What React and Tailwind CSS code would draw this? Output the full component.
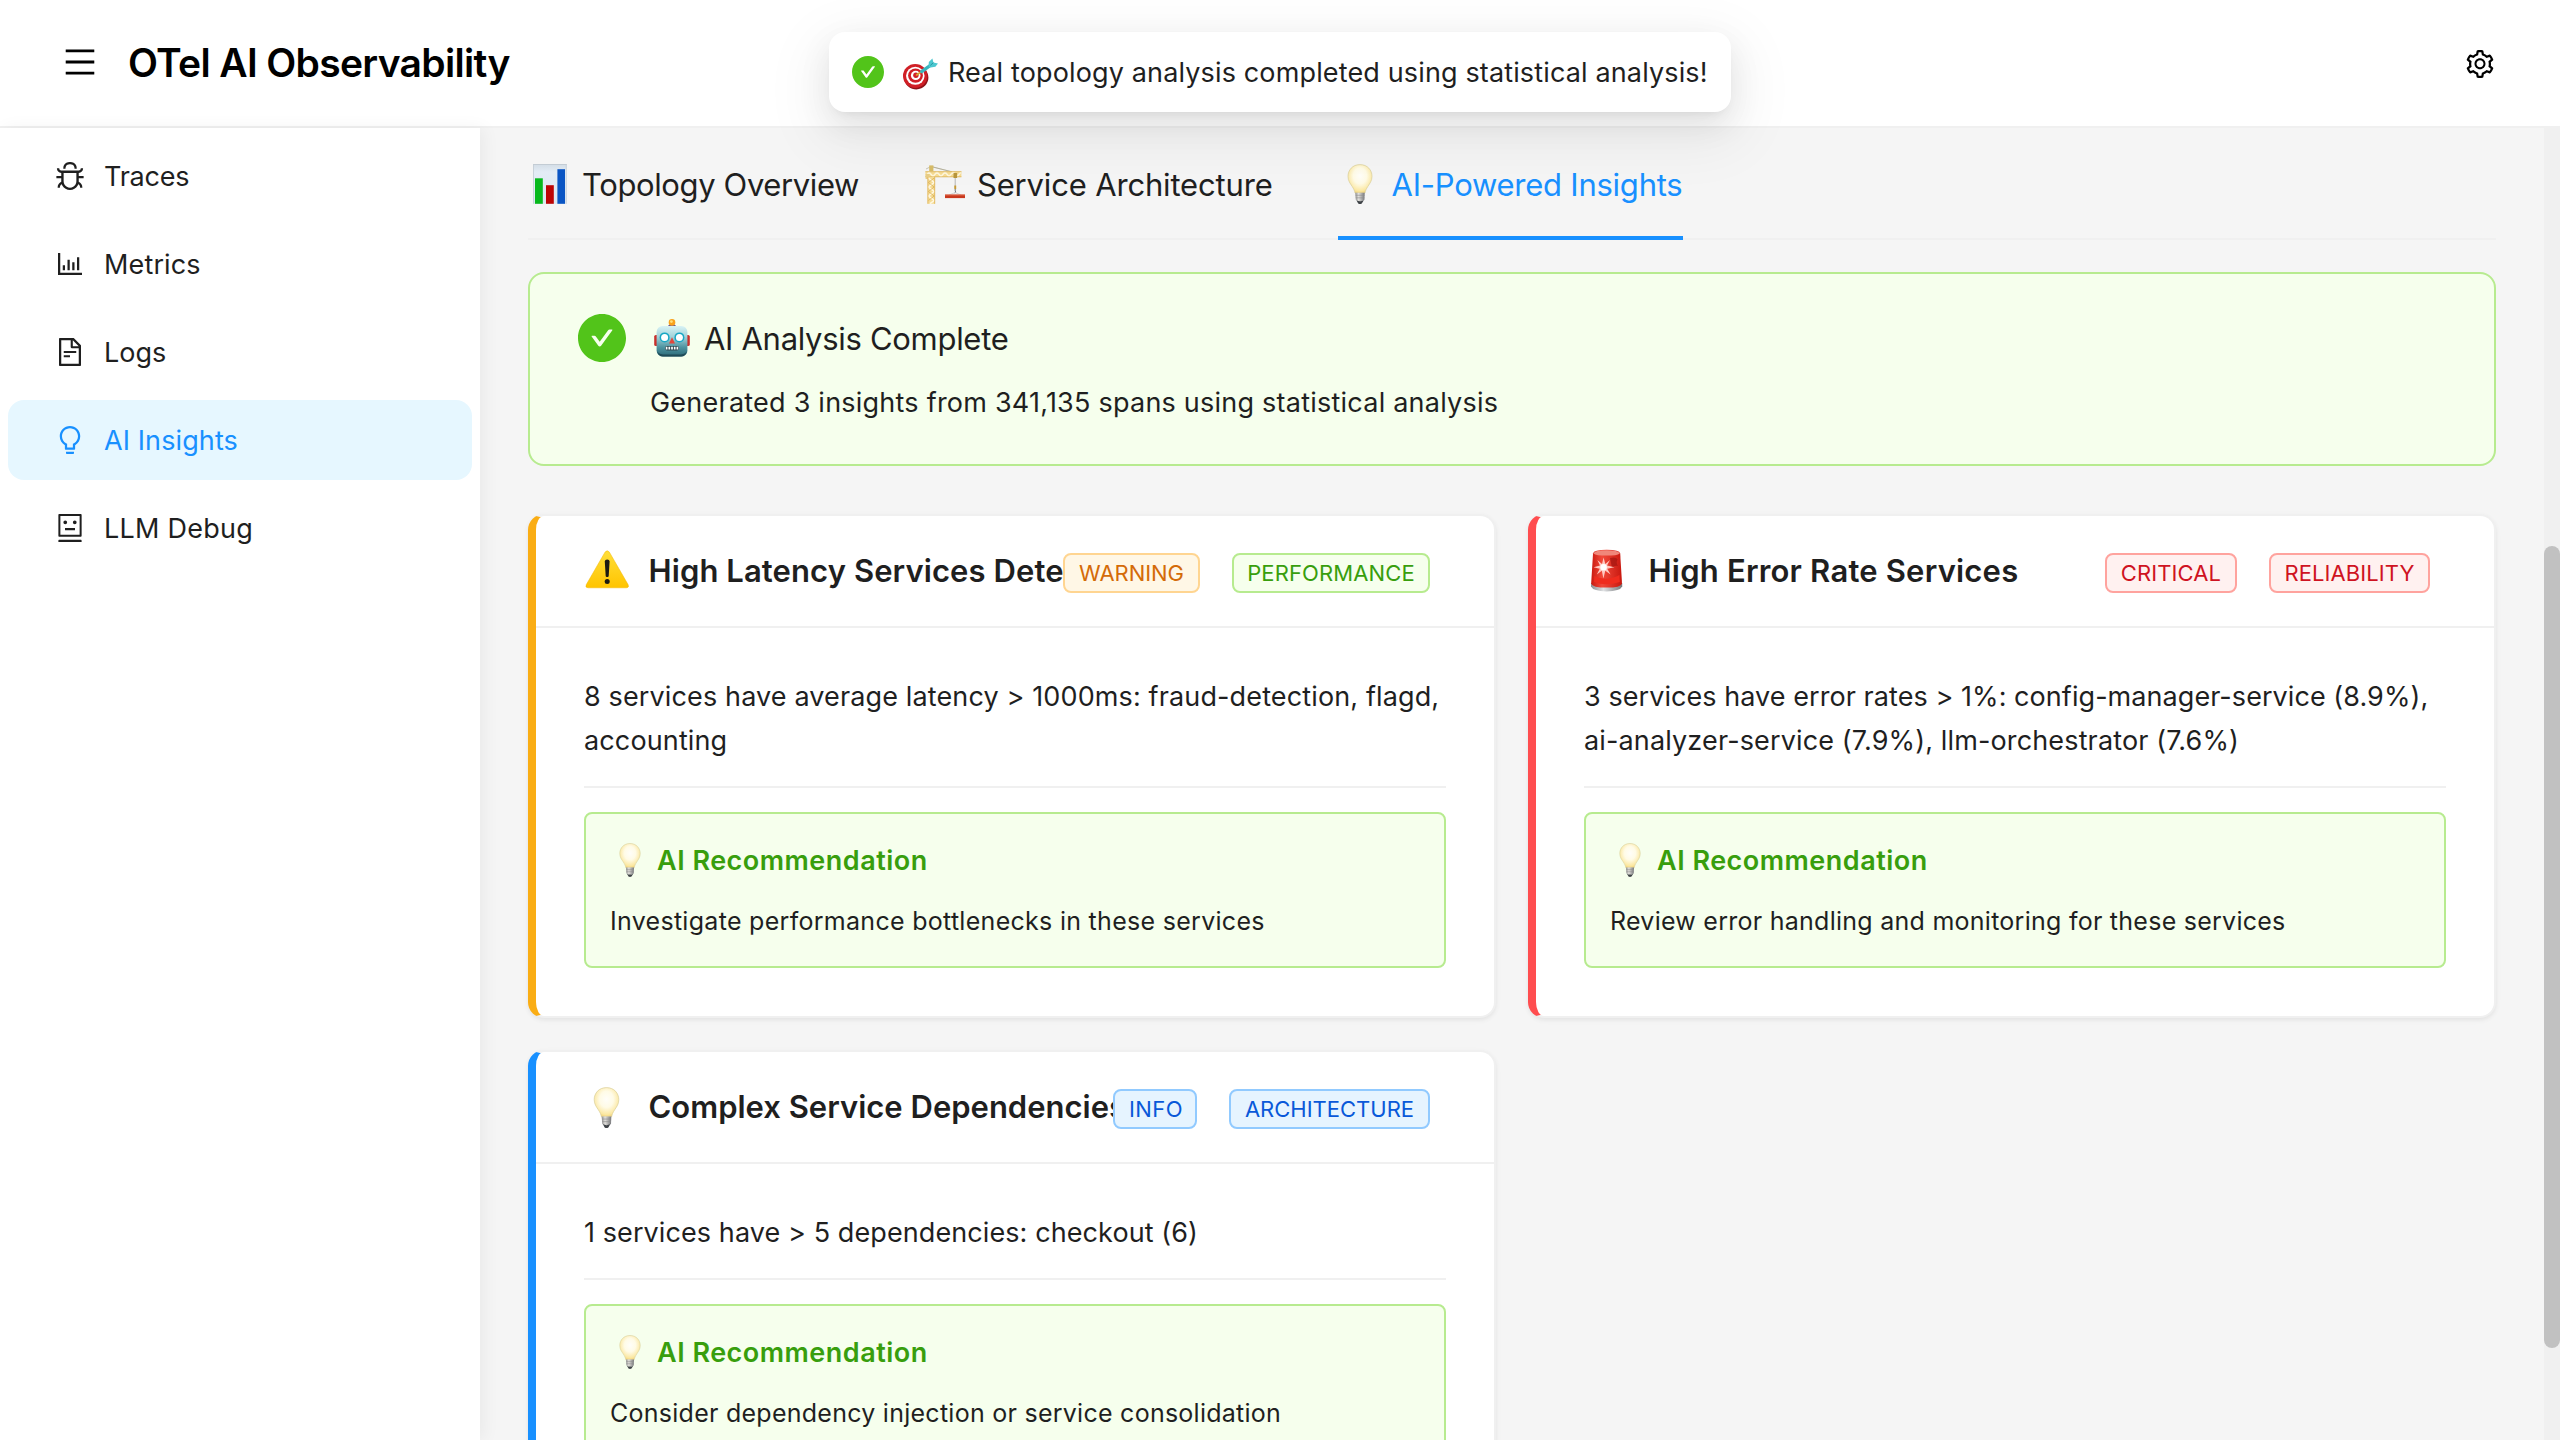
import React from "react";
import {
  AiOutlineMenu,
  AiOutlineBug,
  AiOutlineBarChart,
  AiOutlineFileText,
  AiOutlineBulb,
  AiOutlineRobot,
  AiOutlineSetting,
  AiFillCheckCircle,
} from "react-icons/ai";

const ICON_BOX = "64 64 896 896";

function ChartEmoji({ className }) {
  return (
    <svg viewBox="0 0 40 40" className={className} role="img" aria-label="📊">
      <defs>
        <linearGradient id="chartBg" x1="0" y1="0" x2="0" y2="1">
          <stop offset="0" stopColor="#d3dde6" />
          <stop offset="0.2" stopColor="#e3ecf5" />
          <stop offset="1" stopColor="#dce7f2" />
        </linearGradient>
      </defs>
      <rect x="3" y="0" width="33.6" height="39.8" fill="url(#chartBg)" />
      <rect x="3" y="0" width="33.6" height="1" fill="#c3ccd4" />
      <rect x="3" y="0" width="0.8" height="39.8" fill="#c3ccd4" />
      <rect x="35.8" y="0" width="0.8" height="39.8" fill="#c3ccd4" />
      <rect x="5" y="14.3" width="7.8" height="25.5" fill="#07b81c" />
      <rect x="16" y="21.2" width="7.8" height="18.6" fill="#bd0404" />
      <rect x="27.4" y="5.2" width="7.6" height="34.6" fill="#0a55c4" />
    </svg>
  );
}

function CraneEmoji({ className }) {
  return (
    <svg viewBox="0 0 40 40" className={className} role="img" aria-label="🏗️">
      <path d="M1 5 L6 2.5 L31 9 M6 2.5 L30 8.5" stroke="#a9a48c" strokeWidth="0.6" fill="none" />
      <rect x="4.2" y="1.4" width="4.2" height="6" fill="#d8bd68" />
      <rect x="0.4" y="7.4" width="36" height="5.6" fill="#f6dc94" />
      <path d="M1 12.5 L4 8 L8 12.5 L12 8 L16 12.5 L20 8 L24 12.5 L28 8 L32 12.5 L36 8" stroke="#fff6d9" strokeWidth="1.5" fill="none" />
      <path d="M0.4 7.7 H36.4 M0.4 12.8 H36.4" stroke="#dcb45a" strokeWidth="0.8" />
      <rect x="0.6" y="10" width="4" height="5" fill="#e8cd86" />
      <rect x="28.5" y="9" width="3.6" height="5" fill="#b8963c" />
      <rect x="2.6" y="13" width="7.4" height="26.8" fill="#f5dc96" />
      <path d="M3.4 14 L9.2 18.5 L3.4 23 L9.2 27.5 L3.4 32 L9.2 36.5 L5 39.6" stroke="#fff8e2" strokeWidth="1.5" fill="none" />
      <path d="M9.2 14 L3.4 18.5 L9.2 23 L3.4 27.5 L9.2 32 L3.4 36.5" stroke="#d9ab4d" strokeWidth="0.7" fill="none" />
      <path d="M2.9 13 V39.8 M9.7 13 V39.8" stroke="#e2b75e" strokeWidth="0.9" />
      <path d="M30.2 14 V24" stroke="#b5b5b5" strokeWidth="1" />
      <rect x="29.3" y="21.5" width="1.9" height="3.6" fill="#c59a35" />
      <path d="M30.2 25 V27 Q31.8 28.4 29.6 28.8" stroke="#70777f" strokeWidth="1" fill="none" />
      <path d="M30.2 28.5 L24 31 M30.2 28.5 L36 31" stroke="#c9c9c9" strokeWidth="0.7" />
      <rect x="20" y="30.6" width="20" height="3.5" fill="#c9381e" />
      <rect x="20" y="30.6" width="20" height="0.9" fill="#e0694a" />
    </svg>
  );
}

function BulbEmoji({ className }) {
  return (
    <svg viewBox="0 0 40 40" className={className} role="img" aria-label="💡">
      <defs>
        <radialGradient id="bulbGlass" cx="0.5" cy="0.4" r="0.62">
          <stop offset="0" stopColor="#fffef9" />
          <stop offset="0.45" stopColor="#fffbe6" />
          <stop offset="0.85" stopColor="#fbe7a0" />
          <stop offset="1" stopColor="#efcf74" />
        </radialGradient>
        <linearGradient id="bulbBase" x1="0" y1="0" x2="1" y2="0">
          <stop offset="0" stopColor="#8f8f8f" />
          <stop offset="0.35" stopColor="#e2e0dc" />
          <stop offset="1" stopColor="#77787b" />
        </linearGradient>
      </defs>
      <path
        d="M20 0.6 C12.6 0.6 8 6 8 12.4 C8 16.8 10.2 19.4 12 22.2 C13.8 25 14.6 26.6 15 29 H25 C25.4 26.6 26.2 25 28 22.2 C29.8 19.4 32 16.8 32 12.4 C32 6 27.4 0.6 20 0.6 Z"
        fill="url(#bulbGlass)"
        stroke="#d9cf9c"
        strokeWidth="0.7"
      />
      <path d="M15.3 28.8 H24.7 L24.4 36 Q20 38.6 15.8 36 Z" fill="url(#bulbBase)" />
      <path d="M15.6 31.3 H24.5 M15.7 33.8 H24.4" stroke="#8b8b8b" strokeWidth="0.6" />
      <path d="M16.4 36.2 Q20 38.2 23.8 36.2 L21.8 39.4 Q20 40.4 18.2 39.4 Z" fill="#3f4347" />
    </svg>
  );
}

function RobotEmoji({ className }) {
  return (
    <svg viewBox="0 0 38 38" className={className} role="img" aria-label="🤖">
      <defs>
        <linearGradient id="robotFace" x1="0" y1="0" x2="0" y2="1">
          <stop offset="0" stopColor="#d8f3f5" />
          <stop offset="0.35" stopColor="#a3d3da" />
          <stop offset="0.7" stopColor="#4d93a0" />
          <stop offset="1" stopColor="#2a6876" />
        </linearGradient>
      </defs>
      <rect x="1.2" y="16" width="5" height="11" rx="1.6" fill="#c9302c" />
      <rect x="31.8" y="16" width="5" height="11" rx="1.6" fill="#c9302c" />
      <path d="M14.5 8.5 Q15 5 19 5 Q23 5 23.5 8.5 Z" fill="#6e5590" />
      <circle cx="19" cy="3.4" r="3.3" fill="#f9a21c" />
      <circle cx="18.4" cy="2.6" r="1.4" fill="#ffdf7a" />
      <rect x="3.6" y="7" width="30.8" height="30.6" rx="6" fill="url(#robotFace)" />
      <path d="M4 31 Q5 37.6 10 37.6 H28 Q33 37.6 34 31 Q33 35.4 28 35.4 H10 Q5 35.4 4 31 Z" fill="#1f4b57" />
      <circle cx="11.6" cy="18.4" r="5" fill="#19a7c4" />
      <circle cx="26.4" cy="18.4" r="5" fill="#19a7c4" />
      <circle cx="11.6" cy="18.4" r="3.5" fill="#ffffff" />
      <circle cx="26.4" cy="18.4" r="3.5" fill="#ffffff" />
      <path d="M19 18.2 L22 24.6 H16 Z" fill="#e2473c" />
      <rect x="12" y="27" width="14" height="4.4" rx="1.8" fill="#2b4750" />
      <path d="M13.6 27.8 V30.6 M16.3 27.8 V30.6 M19 27.8 V30.6 M21.7 27.8 V30.6 M24.4 27.8 V30.6" stroke="#ffffff" strokeWidth="1.7" />
    </svg>
  );
}

function TargetEmoji({ className }) {
  return (
    <svg viewBox="0 0 36 36" className={className} role="img" aria-label="🎯">
      <ellipse cx="14.2" cy="21.4" rx="12.2" ry="12" fill="#8e1218" transform="rotate(20 14.2 21.4)" />
      <ellipse cx="13.2" cy="20" rx="12.2" ry="11.9" fill="#d01f26" />
      <ellipse cx="13.3" cy="19.8" rx="9.3" ry="9" fill="#ffffff" />
      <ellipse cx="13.5" cy="19.6" rx="7.4" ry="7.2" fill="#d01f26" />
      <ellipse cx="13.7" cy="19.4" rx="4.8" ry="4.6" fill="#ffffff" />
      <circle cx="13.9" cy="19.2" r="2.7" fill="#d01f26" />
      <path d="M14.6 18.9 L21 14.6" stroke="#d7a52a" strokeWidth="1.8" strokeLinecap="round" />
      <path d="M19.6 15.6 L29.4 8.6" stroke="#3ab5be" strokeWidth="3.2" strokeLinecap="round" />
      <path d="M26.6 10.4 L26.8 6 L30.4 2.6 L31.4 6.6 L36 7.4 L33.4 10.8 L28.6 11.6 Z" fill="#4cc7cf" />
      <path d="M28.4 9.4 L31.4 6.6" stroke="#24909b" strokeWidth="0.9" />
    </svg>
  );
}

function WarningEmoji({ className }) {
  return (
    <svg viewBox="0 0 44 44" className={className} role="img" aria-label="⚠️">
      <defs>
        <linearGradient id="warnFill" x1="0" y1="0" x2="0" y2="1">
          <stop offset="0" stopColor="#ffdf3a" />
          <stop offset="1" stopColor="#ffc400" />
        </linearGradient>
      </defs>
      <path
        d="M20 3.2 Q22.2 0.4 24.4 3.2 L43.2 35.8 Q44.2 38.7 41.4 38.8 H3 Q0.2 38.7 1.2 35.8 Z"
        fill="url(#warnFill)"
        stroke="#f2b600"
        strokeWidth="0.5"
      />
      <path d="M19.8 12.4 Q19.8 10.4 22.2 10.4 Q24.6 10.4 24.6 12.4 L23.7 27.2 Q22.2 29 20.7 27.2 Z" fill="#1c1a12" />
      <circle cx="22.2" cy="32.4" r="2.5" fill="#1c1a12" />
    </svg>
  );
}

function SirenEmoji({ className }) {
  return (
    <svg viewBox="0 0 44 44" className={className} role="img" aria-label="🚨">
      <defs>
        <linearGradient id="sirenGlass" x1="0" y1="0" x2="1" y2="0">
          <stop offset="0" stopColor="#c9190f" />
          <stop offset="0.35" stopColor="#f2493a" />
          <stop offset="1" stopColor="#c8180f" />
        </linearGradient>
        <linearGradient id="sirenBase" x1="0" y1="0" x2="1" y2="0">
          <stop offset="0" stopColor="#8c8f92" />
          <stop offset="0.4" stopColor="#dfe1e3" />
          <stop offset="1" stopColor="#76797c" />
        </linearGradient>
      </defs>
      <path d="M6 34 H37.2 V37.6 Q35 42.4 21.6 42.4 Q8.2 42.4 6 37.6 Z" fill="url(#sirenBase)" />
      <path d="M8 4.4 Q8.6 0.8 21.6 0.8 Q34.6 0.8 35.2 4.4 L37 34.4 Q36 38.6 21.6 38.6 Q7.2 38.6 6.2 34.4 Z" fill="url(#sirenGlass)" />
      <path d="M8.4 4.4 Q10 1.2 21.6 1.2 Q33.2 1.2 34.8 4.4 Q32 6.6 21.6 6.6 Q11.2 6.6 8.4 4.4 Z" fill="#f0877a" />
      <path d="M25 9 Q31 7.4 32.6 10.4 Q30.6 13.4 33 17 Q29 16 27 19 Z" fill="#a51712" opacity="0.75" />
      <path d="M9.4 27 Q21 33 34.4 26 L34.8 33 Q21 37.6 9 33 Z" fill="#ef2c1e" />
      <path
        d="M18.6 8.6 L20.3 15 L25 11 L22 16.6 L29.4 18.2 L22.2 19.8 L25.6 25.6 L20.3 21.8 L18.4 29.4 L16.8 21.8 L11.8 25.6 L14.8 19.8 L8.6 18.2 L15 16.6 L12.4 11 L17 15 Z"
        fill="#ffc9c1"
      />
      <circle cx="18.6" cy="18.2" r="3.2" fill="#ffffff" />
    </svg>
  );
}

const NAV = [
  { label: "Traces", Icon: AiOutlineBug, track: "tracking-[-0.25px]" },
  { label: "Metrics", Icon: AiOutlineBarChart, track: "tracking-[0.14px]" },
  { label: "Logs", Icon: AiOutlineFileText, track: "tracking-[0px]" },
  { label: "AI Insights", Icon: AiOutlineBulb, track: "tracking-[0.1px]", active: true },
  { label: "LLM Debug", Icon: AiOutlineRobot, track: "tracking-[0.25px]" },
];

const TABS = [
  { label: "Topology Overview", Emoji: ChartEmoji, box: "w-[331px] tracking-[-0.38px]" },
  { label: "Service Architecture", Emoji: CraneEmoji, box: "w-[350.5px] tracking-[-0.17px]" },
  { label: "AI-Powered Insights", Emoji: BulbEmoji, box: "w-[345px] tracking-[-0.24px]", active: true },
];

const TONE = {
  orange: "border-[#ffd591] bg-[#fff7e6] text-[#d46b08]",
  green: "border-[#b7eb8f] bg-[#f6ffed] text-[#389e0d]",
  red: "border-[#ffa39e] bg-[#fff1f0] text-[#cf1322]",
  blue: "border-[#91caff] bg-[#e6f4ff] text-[#0958d9]",
};

const INSIGHTS = [
  {
    title: "High Latency Services Detected",
    titleTrack: "tracking-[0.09px]",
    Emoji: WarningEmoji,
    edge: "border-l-[#faad14]",
    tags: [
      { text: "WARNING", tone: "orange", box: "w-[137px] tracking-[-0.05px]" },
      { text: "PERFORMANCE", tone: "green", box: "w-[198px] tracking-[0.12px]" },
    ],
    lines: [
      { text: "8 services have average latency > 1000ms: fraud-detection, flagd,", track: "tracking-[0.13px]" },
      { text: "accounting", track: "tracking-[0.13px]" },
    ],
    recommendation: "Investigate performance bottlenecks in these services",
    recTrack: "tracking-[0.29px]",
  },
  {
    title: "High Error Rate Services",
    titleTrack: "tracking-[0.2px]",
    Emoji: SirenEmoji,
    edge: "border-l-[#ff4d4f]",
    tags: [
      { text: "CRITICAL", tone: "red", box: "w-[132px] tracking-[0.1px]" },
      { text: "RELIABILITY", tone: "red", box: "w-[161px] tracking-[0.1px]" },
    ],
    lines: [
      { text: "3 services have error rates > 1%: config-manager-service (8.9%),", track: "tracking-[0.06px]" },
      { text: "ai-analyzer-service (7.9%), llm-orchestrator (7.6%)", track: "tracking-[0.14px]" },
    ],
    recommendation: "Review error handling and monitoring for these services",
    recTrack: "tracking-[0.26px]",
  },
  {
    title: "Complex Service Dependencies",
    titleTrack: "tracking-[0px]",
    Emoji: BulbEmoji,
    bulb: true,
    edge: "border-l-[#1890ff]",
    tags: [
      { text: "INFO", tone: "blue", box: "w-[84px] tracking-[0.4px] pl-0.5" },
      { text: "ARCHITECTURE", tone: "blue", box: "w-[201px] tracking-[0px]" },
    ],
    lines: [{ text: "1 services have > 5 dependencies: checkout (6)", track: "tracking-[0.09px]" }],
    recommendation: "Consider dependency injection or service consolidation",
    recTrack: "tracking-[0.26px]",
  },
];

function InsightCard({ item }) {
  const { Emoji } = item;
  return (
    <article
      className={`flex flex-col rounded-[16px] border-2 border-l-8 border-[#f0f0f0] bg-white shadow-[0_2px_4px_rgba(0,0,0,0.06),0_2px_12px_-2px_rgba(0,0,0,0.03)] ${item.edge}`}
    >
      <header className="flex h-28 shrink-0 items-center border-b-2 border-[#f0f0f0] pl-[49px] pr-[64px]">
        <div className="flex min-w-0 flex-1 items-center overflow-hidden">
          {item.bulb ? (
            <Emoji className="ml-px mr-0.5 h-[41px] w-[41px] shrink-0" />
          ) : (
            <Emoji className="h-11 w-11 shrink-0" />
          )}
          <h3 className={`ml-[19.5px] whitespace-nowrap text-[31px] font-semibold leading-[50px] ${item.titleTrack}`}>
            {item.title}
          </h3>
        </div>
        <div className="mt-1 flex shrink-0 gap-8">
          {item.tags.map((tag) => (
            <span
              key={tag.text}
              className={`flex h-10 items-center justify-center rounded-lg border-2 text-[22px] leading-9 ${TONE[tag.tone]} ${tag.box}`}
            >
              {tag.text}
            </span>
          ))}
        </div>
      </header>
      <div className="px-12 pb-12 pt-[47px]">
        <p className="text-[27px] leading-[44px]">
          {item.lines.map(({ text, track }) => (
            <span key={text} className={`block whitespace-nowrap ${track}`}>
              {text}
            </span>
          ))}
        </p>
        <hr className="mb-6 mt-[23px] border-t-2 border-[#f0f0f0]" />
        <section className="rounded-lg border-2 border-[#b7eb8f] bg-[#f6ffed] p-6">
          <div className="flex h-11 items-center pl-[3px]">
            <BulbEmoji className="h-[34px] w-[34px]" />
            <h4 className="ml-[10px] pt-0.5 text-[27px] font-semibold leading-[44px] tracking-[0.49px] text-[#389e0d]">
              AI Recommendation
            </h4>
          </div>
          <p className={`mt-[18px] text-[25px] leading-[42px] ${item.recTrack}`}>{item.recommendation}</p>
        </section>
      </div>
    </article>
  );
}

export default function App() {
  return (
    <div className="relative flex h-[1440px] w-[2560px] flex-col overflow-hidden bg-[#f5f5f5] font-['Inter',sans-serif] text-[#1f1f1f]">
      <header className="flex h-32 shrink-0 items-center border-b-2 border-[#f0f0f0] bg-white pl-16 pr-[64px] text-black">
        <AiOutlineMenu viewBox={ICON_BOX} className="mb-0.5 h-8 w-8" />
        <h1 className="ml-8 flex-1 text-[39px] font-semibold leading-[60px] tracking-[-0.67px]">OTel AI Observability</h1>
        <AiOutlineSetting viewBox={ICON_BOX} className="mr-0.5 mt-0.5 h-7 w-7" />
      </header>

      <div className="flex min-h-0 flex-1">
        <nav className="relative flex w-[480px] shrink-0 flex-col gap-2 bg-white p-2 shadow-[4px_0_16px_rgba(0,21,20,0.05)]">
          {NAV.map(({ label, Icon, track, active }) => (
            <a
              key={label}
              className={`flex h-20 items-center rounded-[16px] pl-12 text-[27px] leading-[44px] ${track} ${
                active ? "bg-[#e6f7ff] text-[#1890ff]" : ""
              }`}
            >
              <Icon viewBox={ICON_BOX} className="h-7 w-7 shrink-0" />
              <span className="ml-5 pt-0.5">{label}</span>
            </a>
          ))}
        </nav>

        <main className="min-w-0 flex-1 overflow-hidden pl-12 pr-12">
          <div className="flex h-28 gap-16 border-b-2 border-[#f0f0f0]">
            {TABS.map(({ label, Emoji, box, active }) => (
              <button
                key={label}
                className={`-mb-0.5 flex shrink-0 items-center border-b-4 pl-0.5 pt-1.5 text-[31px] leading-[50px] ${box} ${
                  active ? "border-[#1890ff] text-[#1890ff]" : "border-transparent"
                }`}
              >
                <Emoji className="mb-0.5 h-10 w-10 shrink-0" />
                <span className="ml-3 whitespace-nowrap">{label}</span>
              </button>
            ))}
          </div>

          <section className="mt-8 flex h-[194px] rounded-[16px] border-2 border-[#b7eb8f] bg-[#f6ffed] pl-12 pt-10">
            <AiFillCheckCircle viewBox={ICON_BOX} className="h-12 w-12 shrink-0 text-[#52c41a]" />
            <div className="ml-6">
              <div className="flex h-12 items-center pl-[3px]">
                <RobotEmoji className="h-[38px] w-[38px]" />
                <h2 className="ml-[13px] pt-0.5 text-[31px] leading-[50px] tracking-[-0.3px]">AI Analysis Complete</h2>
              </div>
              <p className="mt-[19px] text-[27px] leading-[44px] tracking-[0.23px]">
                Generated 3 insights from 341,135 spans using statistical analysis
              </p>
            </div>
          </section>

          <div className="mt-12 grid grid-cols-2 gap-8">
            {INSIGHTS.map((item) => (
              <InsightCard key={item.title} item={item} />
            ))}
          </div>
        </main>

        <div className="w-4 shrink-0 bg-[#f0f0f0] pt-[418px]">
          <div className="h-[802px] rounded-full bg-[#c1c1c1]" />
        </div>
      </div>

      <div className="absolute left-[829px] top-8 flex h-20 w-[902px] items-center rounded-[16px] bg-white pl-[23px] shadow-[0_12px_32px_0_rgba(0,0,0,0.08),0_6px_12px_-8px_rgba(0,0,0,0.12),0_18px_56px_16px_rgba(0,0,0,0.05)]">
        <AiFillCheckCircle viewBox={ICON_BOX} className="h-8 w-8 text-[#52c41a]" />
        <TargetEmoji className="ml-[18px] mt-1 h-9 w-9" />
        <span className="ml-[10px] pt-0.5 text-[27px] leading-[44px] tracking-[0.14px]">
          Real topology analysis completed using statistical analysis!
        </span>
      </div>
    </div>
  );
}
